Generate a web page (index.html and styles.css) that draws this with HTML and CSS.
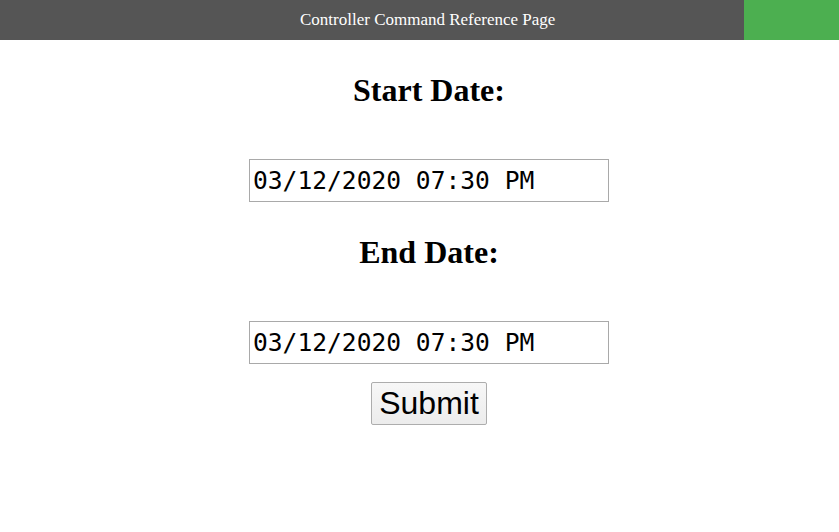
FILE: index.html
```html
<!DOCTYPE html>
<html>
<head>
<meta charset="utf-8">
<link rel="stylesheet" href="styles.css">
</head>
<body>
<header class="topbar">
  <div class="title">Controller Command Reference Page</div>
  <div class="accent"></div>
</header>
<main class="form">
  <h1 class="label">Start Date:</h1>
  <input class="date" type="text" value="03/12/2020 07:30 PM">
  <h1 class="label">End Date:</h1>
  <input class="date" type="text" value="03/12/2020 07:30 PM">
  <button class="submit">Submit</button>
</main>
</body>
</html>
```
FILE: styles.css
```css
html, body {
  margin: 0;
  padding: 0;
  background: #fff;
}
body {
  font-family: "Liberation Serif", serif;
}
.topbar {
  display: flex;
  height: 40px;
  background: #555555;
}
.title {
  flex: 1;
  display: flex;
  align-items: center;
  padding-left: 300px;
  color: #fff;
  font-size: 17px;
}
.accent {
  width: 95px;
  background: #4caf50;
}
.form {
  display: flex;
  flex-direction: column;
  align-items: center;
  padding-left: 19px;
}
.label {
  margin: 32px 0 50px;
  font-size: 32px;
  font-weight: bold;
  line-height: 37px;
  color: #000;
}
.date {
  box-sizing: border-box;
  width: 360px;
  height: 43px;
  margin: 0;
  padding: 0 3px;
  border: 1px solid #a9a9a9;
  font-family: "DejaVu Sans Mono", monospace;
  font-size: 24.6px;
  color: #000;
  outline: none;
}
.submit {
  box-sizing: border-box;
  margin-top: 18px;
  width: 116px;
  height: 43px;
  padding: 0;
  font-family: "Liberation Sans", Arial, sans-serif;
  font-size: 32px;
  color: #000;
  background: linear-gradient(#f7f7f7, #ececec);
  border: 1px solid #adadad;
  border-radius: 2px;
}
```
